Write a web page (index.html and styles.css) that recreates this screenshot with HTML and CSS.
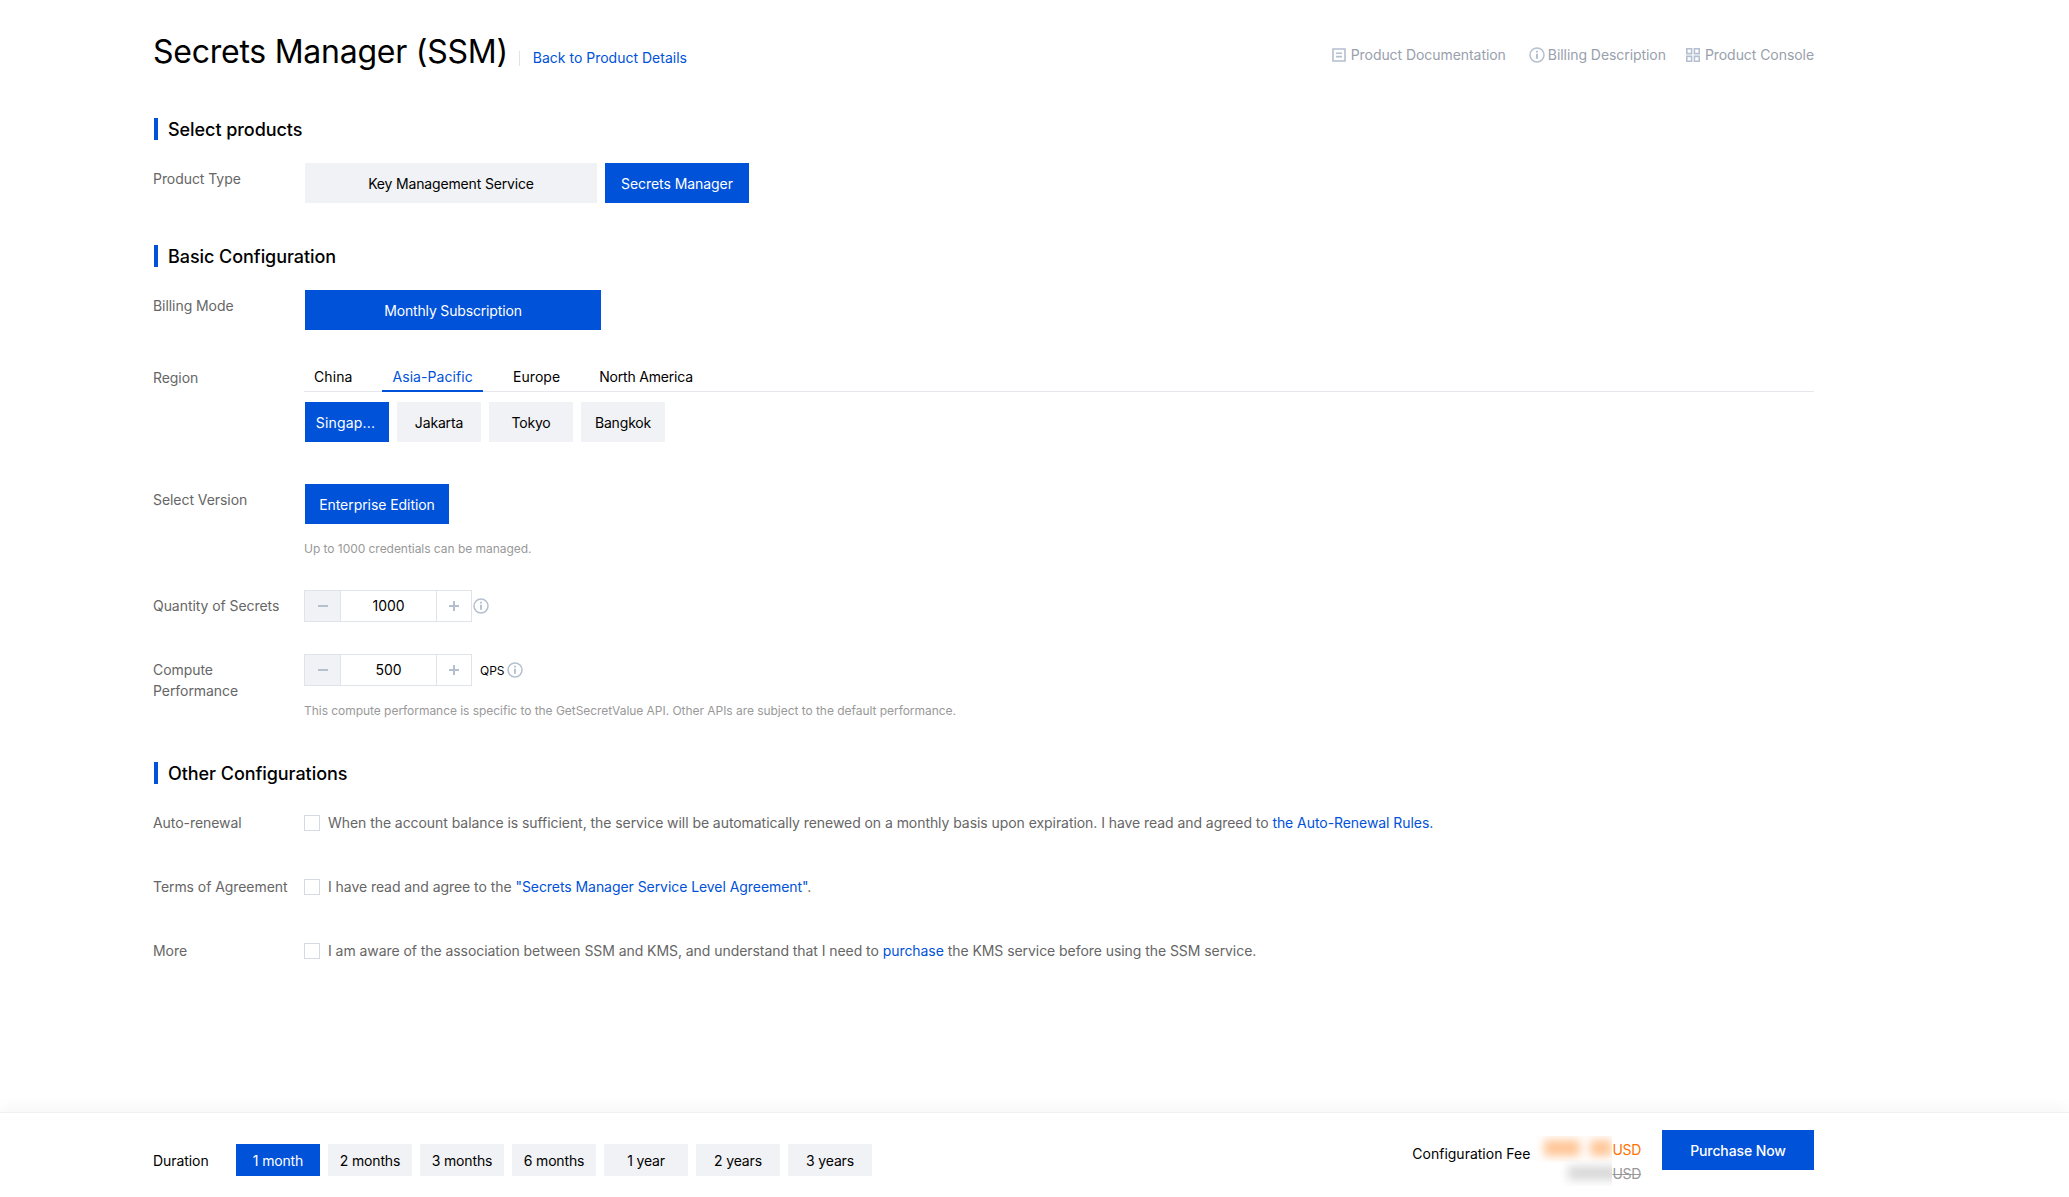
FILE: index.html
```html
<!DOCTYPE html>
<html lang="en">
<head>
    <meta charset="UTF-8">
    <title>Secrets Manager (SSM)</title>
    <link rel="stylesheet" href="styles.css">
</head>
<body>
    <div class="page">
        <header class="page-header">
            <div class="title-group">
                <h1 class="page-title">Secrets Manager (SSM)</h1>
                <a class="back-link">Back to Product Details</a>
            </div>
            <nav class="header-links">
                <a class="header-link">
                    <svg class="icon-doc" width="14" height="14" viewBox="0 0 14 14"><path d="M1 1h12v12H1z" fill="none" stroke="#b4bfd0" stroke-width="1.6"/><path d="M4 5.2h6M4 8.6h6" stroke="#b4bfd0" stroke-width="1.6"/></svg>
                    Product Documentation
                </a>
                <a class="header-link link-billing">
                    <svg width="16" height="16" viewBox="0 0 16 16"><circle cx="8" cy="8" r="7" fill="none" stroke="#b4bfd0" stroke-width="1.5"/><path d="M8 6.8v5M8 3.8v1.6" stroke="#a3afc2" stroke-width="1.6"/></svg>
                    Billing Description
                </a>
                <a class="header-link link-console">
                    <svg width="14" height="14" viewBox="0 0 14 14"><path d="M.8.8h4.8v4.8H.8zM8.4.8h4.8v4.8H8.4zM.8 8.4h4.8v4.8H.8zM8.4 8.4h4.8v4.8H8.4z" fill="none" stroke="#b4bfd0" stroke-width="1.6"/></svg>
                    Product Console
                </a>
            </nav>
        </header>

        <section class="section section-first">
            <h2 class="section-title">Select products</h2>
            <div class="form-row">
                <div class="form-label">Product Type</div>
                <div class="form-body btn-row">
                    <button class="opt opt-key">Key Management Service</button>
                    <button class="opt opt-wide active">Secrets Manager</button>
                </div>
            </div>
        </section>

        <section class="section">
            <h2 class="section-title">Basic Configuration</h2>
            <div class="form-row">
                <div class="form-label">Billing Mode</div>
                <div class="form-body">
                    <button class="opt opt-billing active">Monthly Subscription</button>
                </div>
            </div>
            <div class="form-row">
                <div class="form-label">Region</div>
                <div class="form-body">
                    <div class="tabs">
                        <span class="tab">China</span>
                        <span class="tab tab-active">Asia-Pacific</span>
                        <span class="tab">Europe</span>
                        <span class="tab">North America</span>
                    </div>
                    <div class="btn-row region-btns">
                        <button class="opt opt-region opt-cut active">Singap...</button>
                        <button class="opt opt-region">Jakarta</button>
                        <button class="opt opt-region">Tokyo</button>
                        <button class="opt opt-region">Bangkok</button>
                    </div>
                </div>
            </div>
            <div class="form-row row-version">
                <div class="form-label">Select Version</div>
                <div class="form-body">
                    <button class="opt opt-wide active">Enterprise Edition</button>
                    <p class="hint">Up to 1000 credentials can be managed.</p>
                </div>
            </div>
            <div class="form-row">
                <div class="form-label">Quantity of Secrets</div>
                <div class="form-body stepper-line">
                    <div class="stepper">
                        <span class="step step-minus"><i class="minus"></i></span>
                        <span class="step-value">1000</span>
                        <span class="step step-plus"><i class="minus"></i><i class="minus vert"></i></span>
                    </div>
                    <svg class="info" width="16" height="16" viewBox="0 0 16 16"><circle cx="8" cy="8" r="7" fill="none" stroke="#b4bfd0" stroke-width="1.5"/><path d="M8 6.8v5M8 3.8v1.6" stroke="#a3afc2" stroke-width="1.5"/></svg>
                </div>
            </div>
            <div class="form-row">
                <div class="form-label">Compute<br>Performance</div>
                <div class="form-body">
                    <div class="stepper-line">
                        <div class="stepper">
                            <span class="step step-minus"><i class="minus"></i></span>
                            <span class="step-value">500</span>
                            <span class="step step-plus"><i class="minus"></i><i class="minus vert"></i></span>
                        </div>
                        <span class="unit">QPS</span>
                        <svg width="16" height="16" viewBox="0 0 16 16"><circle cx="8" cy="8" r="7" fill="none" stroke="#b4bfd0" stroke-width="1.5"/><path d="M8 6.8v5M8 3.8v1.6" stroke="#a3afc2" stroke-width="1.5"/></svg>
                    </div>
                    <p class="hint">This compute performance is specific to the GetSecretValue API. Other APIs are subject to the default performance.</p>
                </div>
            </div>
        </section>

        <section class="section">
            <h2 class="section-title">Other Configurations</h2>
            <div class="check-row">
                <div class="check-label">Auto-renewal</div>
                <span class="checkbox"></span>
                <p class="check-text">When the account balance is sufficient, the service will be automatically renewed on a monthly basis upon expiration. I have read and agreed to <a>the Auto-Renewal Rules.</a></p>
            </div>
            <div class="check-row">
                <div class="check-label">Terms of Agreement</div>
                <span class="checkbox"></span>
                <p class="check-text">I have read and agree to the <a>"Secrets Manager Service Level Agreement"</a>.</p>
            </div>
            <div class="check-row">
                <div class="check-label">More</div>
                <span class="checkbox"></span>
                <p class="check-text">I am aware of the association between SSM and KMS, and understand that I need to <a>purchase</a> the KMS service before using the SSM service.</p>
            </div>
        </section>

        <footer class="footer">
            <div class="duration">
                <span class="duration-label">Duration</span>
                <button class="opt opt-time active">1 month</button>
                <button class="opt opt-time">2 months</button>
                <button class="opt opt-time">3 months</button>
                <button class="opt opt-time">6 months</button>
                <button class="opt opt-time">1 year</button>
                <button class="opt opt-time">2 years</button>
                <button class="opt opt-time">3 years</button>
            </div>
            <div class="checkout">
                <span class="fee-label">Configuration Fee</span>
                <div class="fee">
                    <div class="fee-line fee-now">
                        <div class="masked"><i class="blob blob-a"></i><i class="blob blob-b"></i></div>
                        <span>USD</span>
                    </div>
                    <div class="fee-line fee-old">
                        <div class="masked"><i class="blob blob-c"></i></div>
                        <s>USD</s>
                    </div>
                </div>
                <button class="buy-btn">Purchase Now</button>
            </div>
        </footer>
    </div>
</body>
</html>
```

FILE: styles.css
```css
* {
    margin: 0;
    padding: 0;
    box-sizing: border-box;
}

body {
    font-family: 'Inter', 'Liberation Sans', sans-serif;
    font-size: 14px;
    line-height: 21px;
    letter-spacing: -0.06px;
    color: #000;
    background-color: #fff;
}

.page {
    min-height: 100vh;
    height: 1197px;
    display: flex;
    flex-direction: column;
    overflow: hidden;
}

.page-header {
    display: flex;
    justify-content: space-between;
    padding: 30px 255px 0 153px;
    height: 76px;
}

.title-group {
    display: flex;
    align-items: flex-start;
}

.page-title {
    font-size: 32px;
    line-height: 44px;
    font-weight: 400;
    letter-spacing: -0.25px;
    color: #000;
}

.back-link {
    position: relative;
    margin: 17px 0 0 25px;
    color: #0052d9;
    line-height: 22px;
    letter-spacing: 0;
}

.back-link::before {
    content: "";
    position: absolute;
    left: -14px;
    top: 4px;
    width: 1px;
    height: 15px;
    background-color: #dfe3ea;
}

.header-links {
    display: flex;
    align-items: flex-start;
    padding-top: 14px;
}

.header-link {
    display: flex;
    align-items: center;
    gap: 5px;
    color: #98a0ad;
}

.link-billing {
    margin-left: 23px;
    gap: 3px;
}

.link-console {
    margin-left: 20px;
    gap: 5px;
}

.section {
    padding: 0 255px 0 153px;
    margin-top: 42px;
}

.section-first {
    margin-top: 42px;
}

.section-title {
    font-size: 18px;
    line-height: 24px;
    height: 22px;
    font-weight: 500;
    padding-left: 10px;
    border-left: 4px solid #0052d9;
    margin-left: 1px;
    margin-bottom: 23px;
}

.form-row {
    display: flex;
    margin-bottom: 32px;
}

.section .form-row:last-child {
    margin-bottom: 0;
}

.form-label {
    width: 151px;
    flex-shrink: 0;
    padding-top: 5px;
    color: #666;
}

.form-body {
    flex: 1;
    min-width: 0;
}

.btn-row {
    display: flex;
    gap: 8px;
    padding-left: 1px;
}

.opt {
    font-family: inherit;
    font-size: 14px;
    letter-spacing: -0.16px;
    height: 40px;
    border: none;
    background-color: #f1f2f5;
    color: #000;
}

.opt.active {
    background-color: #0052d9;
    color: #fff;
}

.opt-key {
    width: 292px;
}

.opt-wide {
    width: 144px;
    letter-spacing: -0.06px;
}

.opt-billing {
    width: 296px;
    margin-left: 1px;
}

.row-version .opt-wide {
    margin-left: 1px;
    display: block;
}

.tabs {
    display: flex;
    gap: 20px;
    height: 30px;
    border-bottom: 1px solid #e5e7ec;
}

.tab {
    padding: 0 10px;
    height: 30px;
    line-height: 30px;
    letter-spacing: 0.08px;
}

.tab:last-child {
    margin-left: -1px;
    letter-spacing: -0.2px;
}

.tab-active {
    color: #0052d9;
    border-bottom: 2px solid #0052d9;
}

.region-btns {
    margin-top: 10px;
}

.opt-region {
    width: 84px;
}

.opt-cut {
    padding-right: 3px;
    letter-spacing: 0.2px;
}

.row-version {
    margin-top: 42px;
}

.hint {
    font-size: 12px;
    line-height: 18px;
    letter-spacing: -0.04px;
    color: #999;
    margin-top: 16px;
}

.stepper-line {
    display: flex;
    align-items: center;
}

.stepper {
    display: flex;
    width: 168px;
    height: 32px;
    border: 1px solid #dfe3ea;
}

.step {
    position: relative;
    width: 35px;
    flex-shrink: 0;
}

.step-minus {
    background-color: #f1f2f5;
}

.step-plus {
    border-left: 1px solid #dfe3ea;
}

.step .minus {
    position: absolute;
    left: 50%;
    top: 50%;
    width: 10px;
    height: 2px;
    margin: -1px 0 0 -5px;
    background-color: #b4bfd0;
}

.step .vert {
    width: 2px;
    height: 10px;
    margin: -5px 0 0 -1px;
}

.step-value {
    flex: 1;
    text-align: center;
    line-height: 30px;
    border-left: 1px solid #dfe3ea;
}

.info {
    margin-left: 1px;
}

.unit {
    font-size: 12px;
    letter-spacing: 0;
    margin: 0 2px 0 8px;
}

.check-row {
    display: flex;
    align-items: center;
    height: 21px;
    margin-bottom: 43px;
}

.section-title + .check-row {
    margin-top: 28px;
}

.check-label {
    width: 151px;
    color: #666;
    flex-shrink: 0;
}

.checkbox {
    width: 16px;
    height: 16px;
    border: 1px solid #d5d9e2;
    margin-right: 8px;
    flex-shrink: 0;
}

.check-text {
    color: #666;
}

.check-text a {
    color: #0052d9;
}

.footer {
    margin-top: auto;
    height: 85px;
    padding: 0 255px 0 153px;
    display: flex;
    justify-content: space-between;
    border-top: 1px solid #eef0f4;
    box-shadow: 0 -6px 12px rgba(0, 20, 60, 0.035);
}

.duration {
    display: flex;
    align-items: center;
    gap: 8px;
    height: 32px;
    margin-top: 31px;
}

.duration-label {
    width: 75px;
}

.opt-time {
    width: 84px;
    height: 32px;
}

.checkout {
    display: flex;
    align-items: flex-start;
}

.fee-label {
    margin-top: 30px;
    letter-spacing: 0;
}

.fee {
    margin: 0 21px 0 4px;
    padding-top: 24px;
    font-size: 14px;
    letter-spacing: -0.3px;
}

.fee-line {
    display: flex;
    justify-content: flex-end;
    align-items: center;
    height: 24px;
}

.masked {
    position: relative;
    width: 78px;
    height: 26px;
    overflow: hidden;
}

.blob {
    position: absolute;
    filter: blur(5px);
}

.blob-a {
    left: 10px;
    top: 4px;
    width: 36px;
    height: 16px;
    background-color: #ffc596;
}

.blob-b {
    left: 56px;
    top: 4px;
    width: 22px;
    height: 16px;
    background-color: #ffc596;
}

.blob-c {
    left: 34px;
    top: 6px;
    width: 50px;
    height: 14px;
    background-color: #d8d8d8;
}

.fee-now {
    color: #ff7200;
}

.fee-old {
    color: #999;
}

.buy-btn {
    width: 152px;
    height: 40px;
    margin-top: 17px;
    border: none;
    background-color: #0052d9;
    color: #fff;
    font-family: inherit;
    font-size: 14px;
    font-weight: 500;
    letter-spacing: -0.1px;
}
```
